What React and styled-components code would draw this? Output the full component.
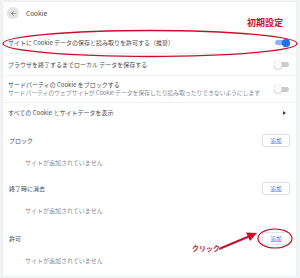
import React from 'react';
import styled, { createGlobalStyle } from 'styled-components';

const GlobalStyle = createGlobalStyle`
  html, body {
    margin: 0;
    padding: 0;
    background: #f1f3f4;
  }
  body {
    font-family: "Noto Sans CJK JP", "Noto Sans", sans-serif;
    color: #202124;
  }
`;

const Page = styled.div`
  width: 300px;
  height: 278px;
  padding: 2px 4px 0 3px;
  box-sizing: border-box;
  overflow: hidden;
`;

const Card = styled.div`
  position: relative;
  background: #fff;
  height: 274px;
  display: flex;
  flex-direction: column;
  box-shadow: 0 0 1px rgba(0, 0, 0, 0.12);
`;

const Header = styled.div`
  height: 22px;
  display: flex;
  align-items: center;
  padding-left: 4px;
  margin-bottom: 8px;
`;

const BackButton = styled.div`
  width: 12px;
  height: 12px;
  border-radius: 50%;
  background: #e3e3e3;
  display: flex;
  align-items: center;
  justify-content: center;
  margin-right: 7px;
`;

const Title = styled.div`
  font-size: 6.5px;
  color: #4a4d51;
`;

const Row = styled.div`
  height: ${p => p.h || 22}px;
  display: flex;
  align-items: center;
  justify-content: space-between;
  padding: 0 6px 0 5px;
  border-bottom: ${p => (p.last ? 'none' : '1px solid #f0f0f0')};
  box-sizing: border-box;
`;

const TextCol = styled.div`
  display: flex;
  flex-direction: column;
`;

const Label = styled.div`
  font-size: 6px;
  line-height: 8px;
  color: #4a4d51;
  white-space: nowrap;
`;

const SubLabel = styled(Label)`
  letter-spacing: -0.2px;
  color: #8a8e93;
`;

const Track = styled.div`
  position: relative;
  width: 14px;
  height: 5px;
  border-radius: 3px;
  background: ${p => (p.on ? '#8ab4f8' : '#c9cbce')};
  margin-right: 1px;
`;

const Knob = styled.div`
  position: absolute;
  top: -1.5px;
  left: ${p => (p.on ? '7px' : '-1px')};
  width: 8px;
  height: 8px;
  border-radius: 50%;
  background: ${p => (p.on ? '#1a73e8' : '#fafafa')};
  box-shadow: 0 0.5px 1.5px rgba(0, 0, 0, 0.3);
`;

const Caret = styled.div`
  width: 0;
  height: 0;
  border-top: 2px solid transparent;
  border-bottom: 2px solid transparent;
  border-left: 3px solid #3c4043;
  margin-right: 4px;
`;

const SectionHead = styled.div`
  height: 20px;
  margin-top: ${p => p.gap}px;
  display: flex;
  align-items: center;
  justify-content: space-between;
  padding: 0 6px 0 6px;
`;

const AddButton = styled.div`
  width: 28px;
  height: 13px;
  box-sizing: border-box;
  border: 1px solid #e0e2e5;
  border-radius: 2px;
  font-size: 5.5px;
  color: #1a73e8;
  display: flex;
  align-items: center;
  justify-content: center;
  margin-top: -1px;
`;

const Empty = styled.div`
  height: 22px;
  display: flex;
  align-items: center;
  padding-left: 22px;
  font-size: 6px;
  color: #8a8e93;
`;

const Overlay = styled.svg`
  position: absolute;
  left: -3px;
  top: -2px;
  pointer-events: none;
`;

const Note = styled.div`
  position: absolute;
  left: ${p => p.x}px;
  top: ${p => p.y}px;
  font-size: ${p => p.size}px;
  font-weight: bold;
  color: #c8102e;
  white-space: nowrap;
  text-shadow: 0 0 1px #fff, 0 0 1px #fff, 0 0 2px #fff;
`;

const Toggle = ({ on }) => (
  <Track on={on ? 1 : 0}>
    <Knob on={on ? 1 : 0} />
  </Track>
);

const Section = ({ title, gap }) => (
  <>
    <SectionHead gap={gap}>
      <Label>{title}</Label>
      <AddButton>追加</AddButton>
    </SectionHead>
    <Empty>サイトが追加されていません</Empty>
  </>
);

export default function App() {
  return (
    <Page>
      <GlobalStyle />
      <Card>
        <Header>
          <BackButton>
            <svg width="7" height="7" viewBox="0 0 24 24">
              <path d="M20 11H7.83l5.59-5.59L12 4l-8 8 8 8 1.41-1.41L7.83 13H20v-2z" fill="#5f6368" />
            </svg>
          </BackButton>
          <Title>Cookie</Title>
        </Header>
        <Row>
          <Label>サイトに Cookie データの保存と読み取りを許可する（推奨）</Label>
          <Toggle on />
        </Row>
        <Row>
          <Label>ブラウザを終了するまでローカル データを保存する</Label>
          <Toggle />
        </Row>
        <Row h={27}>
          <TextCol>
            <Label>サードパーティの Cookie をブロックする</Label>
            <SubLabel>サードパーティのウェブサイトが Cookie データを保存したり読み取ったりできないようにします</SubLabel>
          </TextCol>
          <Toggle />
        </Row>
        <Row h={20} last>
          <Label>すべての Cookie とサイトデータを表示</Label>
          <Caret />
        </Row>
        <Section title="ブロック" gap={8} />
        <Section title="終了時に消去" gap={6} />
        <Section title="許可" gap={8} />

        <Overlay width="300" height="278" viewBox="0 0 300 278">
          <ellipse cx="150" cy="43.5" rx="147" ry="13" fill="none" stroke="#c8102e" strokeWidth="1.3" />
          <ellipse cx="275" cy="238.5" rx="17" ry="9.5" fill="none" stroke="#c8102e" strokeWidth="1.2" />
          <line x1="219" y1="249" x2="250" y2="236" stroke="#c8102e" strokeWidth="2" />
          <polygon points="257,233 246,232.5 250,241" fill="#c8102e" />
        </Overlay>
        <Note x={244} y={14} size={9}>初期設定</Note>
        <Note x={189} y={241} size={7}>クリック</Note>
      </Card>
    </Page>
  );
}
